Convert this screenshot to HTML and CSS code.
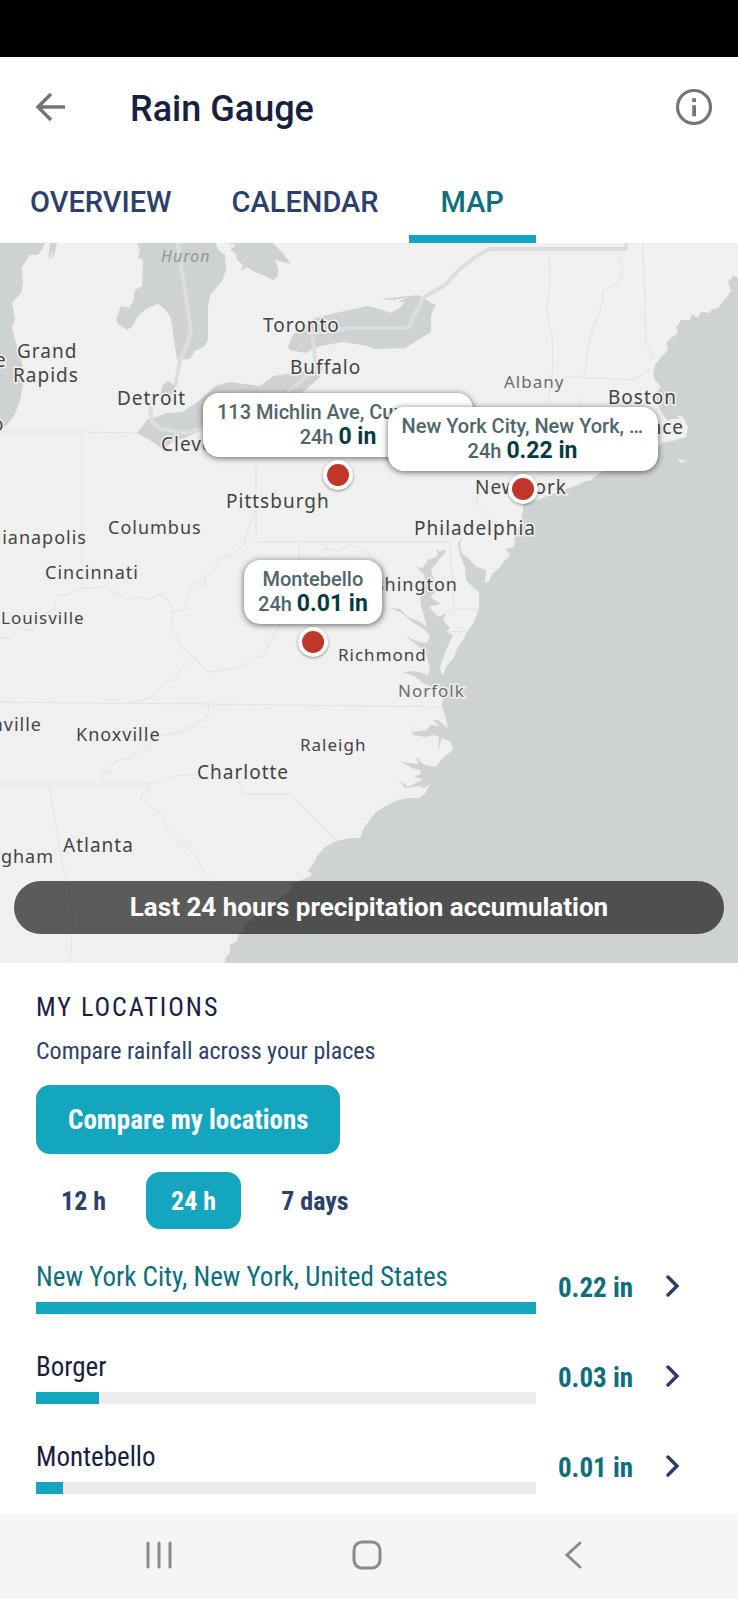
FILE: index.html
```
<!DOCTYPE html>
<html lang="en">
<head>
  <meta charset="UTF-8">
  <meta name="viewport" content="width=device-width, initial-scale=1.0">
  <title>Rain Gauge</title>
  <link rel="stylesheet" href="styles.css">
</head>
<body>

<div class="status-bar"></div>

<header class="app-bar">
  <button class="icon-btn" type="button" aria-label="Back">
    <svg width="30" height="30" viewBox="0 0 30 30"><path d="M29 15H3M15 2L2 15l13 13" fill="none" stroke="#757575" stroke-width="3.6"/></svg>
  </button>
  <h1>Rain Gauge</h1>
  <button class="icon-btn" type="button" aria-label="Info">
    <svg width="38" height="38" viewBox="0 0 38 38">
      <circle cx="19" cy="19" r="16.5" fill="none" stroke="#757575" stroke-width="3.2"/>
      <path d="M17.2 10.2h3.8v3.8h-3.8zM17.2 17.2h3.8v11h-3.8z" fill="#757575"/>
    </svg>
  </button>
</header>

<nav class="tabs">
  <a href="#overview">OVERVIEW</a>
  <a href="#calendar">CALENDAR</a>
  <a class="active" href="#map" aria-current="page">MAP</a>
</nav>

<main>
  <section class="map" id="map">
    <svg class="map-canvas" viewBox="0 0 738 720">
      <rect width="738" height="720" fill="#f0f0f0"/>

      <!-- Lakes -->
      <g class="water">
        <path d="M0 0H45L42 6 38 12 30 12 22 24 23 40 21 50 12 60 15 75 12 85 15 97 20 112 23 125 23 142 20 158 14 173 5 184 0 187Z"/>
        <path d="M50 0H57L55 9 51 18 53 8 48 16Z"/>
        <path d="M137 0L140 8 138 15 143 17 142 43 135 47 133 59 129 65 121 63 116 77 118 81 127 87 132 84 138 73 146 66 158 61 165 66 171 75 173 90 177 117 190 116 195 108 204 104 208 97 208 65 210 52 222 38 226 27 225 12 218 7 216 0Z"/>
        <path d="M227 0L236 2 230 7 236 11 237 17 243 22 241 28 247 24 255 29 263 32 273 37 278 33 278 25 275 17 291 21 282 9 273 0Z"/>
        <path d="M288 104L293 92 315 75 340 69 368 63 383 67 390 70 400 65 405 59 398 59 408 54 395 57 380 56 400 54 418 52 430 59 436 62 431 72 431 89 418 97 405 105 375 106 368 103 343 99 320 103 305 110 290 107Z"/>
        <path d="M137 190L147 177 167 170 183 169 200 157 217 142 230 139 260 143 273 133 293 130 323 124 320 134 303 149 250 168 205 185 187 194 172 199 163 207 153 199Z"/>
        <path d="M160 154L162 143 167 138 175 142 175 150 168 154Z"/>
      </g>

      <!-- Atlantic -->
      <path class="water" d="M738 34L733 33 728 39 731 48 726 55 718 65 712 66 709 70 701 69 698 75 692 71 690 77 681 77 676 85 678 90 671 95 666 100 668 107 661 114 655 122 653 130 655 137 661 144 655 151 658 162 663 172 668 178 672 176 679 176 677 172 683 174 688 184 686 194 672 198 661 200 656 210 620 222 598 230 590 238 581 238 568 244 555 250 540 256 523 260 523 269 520 280 515 294 514 304 506 306 510 313 504 318 500 324 493 330 489 338 485 340 486 327 477 324 468 315 461 309 460 300 463 294 458 300 460 312 465 324 466 337 475 346 479 349 479 364 476 374 473 381 468 387 463 397 458 404 454 414 446 424 444 430 442 432 440 424 446 407 453 392 446 389 450 385 443 377 446 370 438 374 429 364 441 361 430 354 437 348 428 347 435 340 431 327 440 315 446 309 444 306 440 309 436 306 438 313 428 317 422 325 416 324 424 331 425 337 420 352 421 362 427 384 420 379 408 374 400 366 390 365 402 370 411 378 425 387 430 393 427 400 418 399 406 393 418 403 426 410 430 425 428 432 415 428 403 429 414 433 423 440 438 447 443 450 442 464 445 472 448 485 438 477 433 477 440 483 430 482 427 487 413 489 410 477 413 492 425 494 435 492 439 494 438 508 442 495 451 499 453 507 445 513 441 517 436 524 425 522 418 517 420 514 416 516 419 521 401 519 412 525 420 527 421 531 414 534 423 536 418 539 408 544 398 536 405 545 420 543 424 545 430 541 426 549 420 555 408 555 398 557 384 564 376 569 368 579 363 587 360 595 350 595 337 598 325 604 318 612 312 623 308 627 312 632 304 636 293 640 289 648 282 653 273 660 261 665 252 676 244 682 244 689 239 690 237 698 230 702 230 710 226 714 225 720H738Z"/>
      <path class="islands" d="M523 257L548 243 570 235 590 230 602 229 590 236 575 243 550 252ZM677 216L687 218 681 220Z"/>

      <!-- Country border -->
      <path class="country" d="M178 0L181 23 191 87 188 100 180 117 175 144M150 164L152 179 160 186 187 190 215 180 280 156 316 125 312 90 350 85H408L423 55 445 42 460 26 478 12 490 6H625L627 0"/>

      <!-- State borders -->
      <g class="state">
        <path d="M0 189H82L137 190M82 191V345M256 202V299H450L458 292M299 299V318"/>
        <path d="M549 10L550 40 547 62 549 84 552 90 553 125 548 160M624 6L620 18 623 28 618 40 603 48 603 58 595 80 589 98 586 125 582 135 634 137 650 126M643 0L646 100 655 116M562 134H582M580 155V170M477 240V260L492 275 494 284"/>
        <path d="M256 266L252 275 247 290 243 302 232 312 218 318 215 327 205 333 204 342 195 339 188 350 185 366 173 369 172 384 177 394 183 405 196 416 205 428 212 429 224 427 240 424 262 413 267 405 275 390 281 380"/>
        <path d="M173 369L169 357 159 351 149 357 142 354 130 357 115 350 105 344 82 345 65 352 57 352 54 366 38 374 33 388 22 386 18 382 12 395 0 394M196 416L178 430 163 443 150 455 129 460M0 459L80 460 209 461 442 464M209 461L208 473 195 481 188 485 178 489 171 491 160 493 145 506 130 515 115 518 110 528 102 530 102 541"/>
        <path d="M0 541H150L180 532H235L245 551H290L337 598M150 541L141 555 154 567 162 571 168 585 180 600 195 612 202 626 215 638 220 655 230 676 240 690M49 541L62 620 69 645 73 677 70 720M450 299L454 366H478M315 317L325 305 337 308 350 302 365 307 375 320 382 330M448 389L466 388"/>
      </g>

      <!-- Place names -->
      <g class="place">
        <text class="city" x="17" y="115">Grand</text>
        <text class="city" x="13" y="139">Rapids</text>
        <text class="city" x="-5" y="124">e</text>
        <text class="city" x="-8" y="188">o</text>
        <text class="city" x="263" y="89">Toronto</text>
        <text class="city" x="290" y="131">Buffalo</text>
        <text class="city" x="117" y="162">Detroit</text>
        <text class="city" x="161" y="208">Cleveland</text>
        <text class="city" x="608" y="161">Boston</text>
        <text class="city anchor-end" x="684" y="191">Providence</text>
        <text class="city" x="475" y="251">New York</text>
        <text x="226" y="265" class="city">Pittsburgh</text>
        <text x="108" y="291">Columbus</text>
        <text class="anchor-end" x="87" y="301">Indianapolis</text>
        <text class="city" x="414" y="292">Philadelphia</text>
        <text x="45" y="336">Cincinnati</text>
        <text class="anchor-end" x="458" y="348">Washington</text>
        <text class="town" x="1" y="381">Louisville</text>
        <text class="town" x="338" y="418">Richmond</text>
        <text class="anchor-end" x="42" y="488">Nashville</text>
        <text x="76" y="498">Knoxville</text>
        <text class="town" x="300" y="508">Raleigh</text>
        <text class="city" x="197" y="536">Charlotte</text>
        <text class="city" x="63" y="609">Atlanta</text>
        <text class="anchor-end" x="54" y="620">Birmingham</text>
        <text class="minor" x="504" y="145">Albany</text>
        <text class="minor" x="398" y="454">Norfolk</text>
      </g>
      <text class="lake-name" x="161" y="19">Huron</text>
    </svg>

    <div class="marker marker-michlin">
      <div class="callout">
        <div class="callout-name">113 Michlin Ave, Curwensville, PA</div>
        <div class="callout-value">24h <strong>0 in</strong></div>
      </div>
      <span class="dot"></span>
    </div>
    <div class="marker marker-nyc">
      <div class="callout">
        <div class="callout-name">New York City, New York, ...</div>
        <div class="callout-value">24h <strong>0.22 in</strong></div>
      </div>
      <span class="dot"></span>
    </div>
    <div class="marker marker-montebello">
      <div class="callout">
        <div class="callout-name">Montebello</div>
        <div class="callout-value">24h <strong>0.01 in</strong></div>
      </div>
      <span class="dot"></span>
    </div>

    <p class="map-caption">Last 24 hours precipitation accumulation</p>
  </section>

  <section class="locations">
    <h2>MY LOCATIONS</h2>
    <p class="subtitle">Compare rainfall across your places</p>
    <button class="compare-btn" type="button">Compare my locations</button>

    <div class="periods">
      <button type="button">12 h</button>
      <button class="active" type="button" aria-pressed="true">24 h</button>
      <button type="button">7 days</button>
    </div>

    <ul class="location-list">
      <li>
        <a class="location current" href="#nyc">
          <span class="location-main">
            <span class="location-name">New York City, New York, United States</span>
            <span class="bar"><span class="bar-fill" style="width: 100%"></span></span>
          </span>
          <span class="amount">0.22 in</span>
          <svg class="chevron" width="14" height="22" viewBox="0 0 14 22"><path d="M2 2l9 9-9 9"/></svg>
        </a>
      </li>
      <li>
        <a class="location" href="#borger">
          <span class="location-main">
            <span class="location-name">Borger</span>
            <span class="bar"><span class="bar-fill" style="width: 12.5%"></span></span>
          </span>
          <span class="amount">0.03 in</span>
          <svg class="chevron" width="14" height="22" viewBox="0 0 14 22"><path d="M2 2l9 9-9 9"/></svg>
        </a>
      </li>
      <li>
        <a class="location" href="#montebello">
          <span class="location-main">
            <span class="location-name">Montebello</span>
            <span class="bar"><span class="bar-fill" style="width: 5.4%"></span></span>
          </span>
          <span class="amount">0.01 in</span>
          <svg class="chevron" width="14" height="22" viewBox="0 0 14 22"><path d="M2 2l9 9-9 9"/></svg>
        </a>
      </li>
    </ul>
  </section>
</main>

<footer class="system-nav">
  <button type="button" aria-label="Recent apps">
    <svg width="30" height="30" viewBox="0 0 30 30"><path d="M3 3v24M14 3v24M25 3v24"/></svg>
  </button>
  <button type="button" aria-label="Home">
    <svg width="30" height="30" viewBox="0 0 30 30"><rect x="2" y="2" width="26" height="26" rx="8"/></svg>
  </button>
  <button type="button" aria-label="Go back">
    <svg width="30" height="30" viewBox="0 0 30 30"><path d="M21 3L8 15l13 12"/></svg>
  </button>
</footer>

</body>
</html>
```
FILE: styles.css
```
:root {
  --accent: #14a5bf;
  --teal: #0d6e7c;
  --navy: #2b416b;
  --dark: #17213f;
  --condensed: "Roboto Condensed", Roboto, sans-serif;
}
* {
  box-sizing: border-box;
}
body {
  margin: 0;
  min-height: 100vh;
  display: flex;
  flex-direction: column;
  font-family: Roboto, sans-serif;
  background: #fff;
  color: var(--dark);
}
button {
  border: none;
  background: none;
  padding: 0;
  font-family: inherit;
  cursor: pointer;
}
a {
  color: inherit;
  text-decoration: none;
}
h1, h2, p, ul {
  margin: 0;
  padding: 0;
}

.status-bar {
  height: 57px;
  background: #000;
}
.app-bar {
  height: 100px;
  padding: 0 25px 0 36px;
  display: flex;
  align-items: center;
}
.icon-btn {
  display: flex;
}
.app-bar h1 {
  flex: 1;
  margin-left: 64px;
  padding-top: 4px;
  font-size: 36px;
  line-height: 48px;
  font-weight: 500;
}

.tabs {
  display: flex;
  height: 86px;
}
.tabs a {
  padding: 4px 30px 0;
  display: flex;
  align-items: center;
  border-top: 8px solid transparent;
  border-bottom: 8px solid transparent;
  font-size: 29px;
  font-weight: 500;
  color: var(--navy);
}
.tabs .active {
  padding-left: 32px;
  padding-right: 32px;
  color: var(--teal);
  border-bottom-color: var(--accent);
}

/* Map */
.map {
  position: relative;
  overflow: hidden;
}
.map-canvas {
  display: block;
  width: 100%;
}
.water {
  fill: #ced2d3;
}
.islands {
  fill: #f0f0f0;
}
.country {
  fill: none;
  stroke: #dcdedd;
  stroke-width: 4;
  stroke-linejoin: round;
}
.state {
  fill: none;
  stroke: #e2e2e2;
  stroke-width: 1;
}
.place, .lake-name {
  font-family: "Noto Sans", sans-serif;
  font-size: 18px;
  letter-spacing: 1px;
  fill: #444;
  stroke: #f0f0f0;
  stroke-width: 3;
  paint-order: stroke;
}
.place .city {
  font-size: 19px;
}
.place .town {
  font-size: 17px;
}
.place .minor {
  font-size: 17px;
  fill: #6c6c6c;
}
.lake-name {
  font-size: 16px;
  font-style: italic;
  fill: #929698;
  stroke: none;
}
.anchor-end {
  text-anchor: end;
}

.marker {
  position: absolute;
  transform: translate(-50%, -100%);
  display: flex;
  flex-direction: column;
  align-items: center;
  gap: 3px;
}
.marker-michlin {
  left: 45.8%;
  top: 34.3%;
}
.marker-nyc {
  left: 70.8%;
  top: 36.3%;
}
.marker-montebello {
  left: 42.4%;
  top: 57.5%;
}
.callout {
  max-width: 270px;
  padding: 7px 14px;
  border-radius: 16px;
  background: #fff;
  box-shadow: 0 1px 6px rgba(0, 0, 0, 0.6);
  text-align: center;
  color: #4f666b;
  font-weight: 500;
}
.callout-name {
  overflow: hidden;
  text-overflow: ellipsis;
  white-space: nowrap;
  font-size: 20px;
  line-height: 24px;
}
.callout-value {
  white-space: nowrap;
  font-size: 20px;
  line-height: 25px;
}
.callout-value strong {
  font-size: 23px;
  font-weight: 700;
  color: #053a42;
}
.dot {
  width: 30px;
  height: 30px;
  border: 4px solid #fff;
  border-radius: 50%;
  background: #c0372a;
  box-shadow: 0 1px 3px rgba(0, 0, 0, 0.4);
}
.map-caption {
  position: absolute;
  left: 14px;
  right: 14px;
  bottom: 29px;
  border-radius: 27px;
  background: rgba(0, 0, 0, 0.62);
  color: #fff;
  text-align: center;
  font-size: 26px;
  line-height: 53px;
  font-weight: 700;
}

/* Locations */
.locations {
  flex: 1;
  padding: 28px 52px 20px 36px;
  font-family: var(--condensed);
}
.locations h2 {
  font-size: 26px;
  line-height: 32px;
  font-weight: 400;
  letter-spacing: 2px;
}
.subtitle {
  margin-top: 12px;
  font-size: 24px;
  line-height: 32px;
  color: var(--navy);
}
.compare-btn {
  display: block;
  margin-top: 18px;
  height: 69px;
  padding: 0 32px;
  border-radius: 14px;
  background: var(--accent);
  color: #fff;
  font-size: 27px;
  font-weight: 700;
}
.periods {
  display: flex;
  gap: 15px;
  margin-top: 18px;
}
.periods button {
  height: 57px;
  padding: 0 25px;
  border-radius: 14px;
  font-size: 26px;
  font-weight: 700;
  color: var(--navy);
}
.periods .active {
  background: var(--accent);
  color: #fff;
}
.location-list {
  list-style: none;
  margin-top: 32px;
  display: flex;
  flex-direction: column;
  gap: 37px;
}
.location {
  display: flex;
  align-items: center;
}
.location-main {
  flex: 1;
  display: flex;
  flex-direction: column;
  gap: 9px;
}
.location-name {
  font-size: 27px;
  line-height: 32px;
}
.current .location-name {
  color: var(--teal);
}
.bar {
  display: flex;
  height: 12px;
  background: #ececec;
}
.bar-fill {
  background: var(--accent);
}
.amount {
  width: 97px;
  text-align: right;
  font-size: 27px;
  font-weight: 700;
  color: var(--teal);
}
.chevron {
  margin: 0 6px 4px 33px;
  fill: none;
  stroke: #2b3d63;
  stroke-width: 3.4;
  stroke-linecap: round;
}

.system-nav {
  display: flex;
  justify-content: center;
  gap: 177px;
  height: 85px;
  padding-right: 4px;
  background: #f5f5f5;
}
.system-nav svg {
  fill: none;
  stroke: #8b8b8b;
  stroke-width: 3;
  stroke-linecap: round;
}
```
